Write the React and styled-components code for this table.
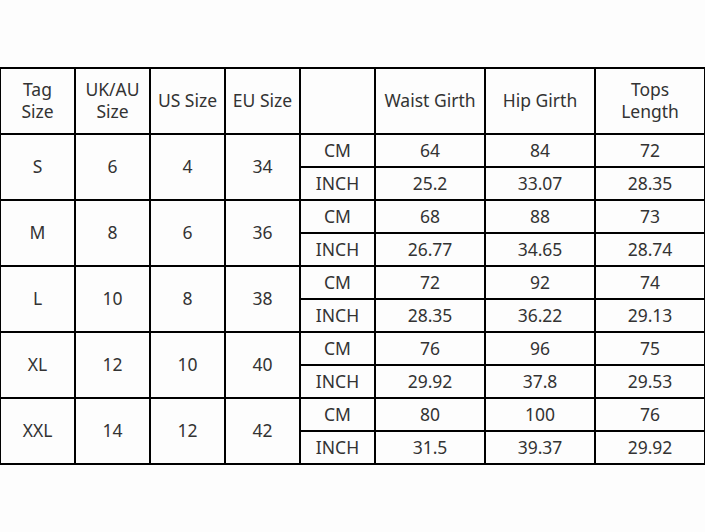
import React from 'react';
import styled, { createGlobalStyle } from 'styled-components';

const Global = createGlobalStyle`
  body {
    margin: 0;
    background: #fff;
    font-family: 'Noto Sans', 'Liberation Sans', sans-serif;
  }
`;

const Page = styled.div`
  width: 705px;
  height: 532px;
  padding-top: 67px;
  box-sizing: border-box;
  background: #fdfdfd;
  overflow: hidden;
`;

const Table = styled.table`
  border-collapse: collapse;
  table-layout: fixed;
  width: 705px;
  margin-left: -1px;
  color: #333;
  font-size: 17.5px;
`;

const Cell = styled.td`
  border: 2px solid #000;
  text-align: center;
  vertical-align: middle;
  padding: 0 0 2px;
  height: ${(p) => p.$h || 29}px;
  line-height: 22px;
`;

const Head = styled(Cell).attrs({ as: 'th' })`
  font-weight: normal;
`;

const cols = [75, 75, 75, 75, 75, 110, 110, 110];

const rows = [
  ['S', '6', '4', '34', ['64', '84', '72'], ['25.2', '33.07', '28.35']],
  ['M', '8', '6', '36', ['68', '88', '73'], ['26.77', '34.65', '28.74']],
  ['L', '10', '8', '38', ['72', '92', '74'], ['28.35', '36.22', '29.13']],
  ['XL', '12', '10', '40', ['76', '96', '75'], ['29.92', '37.8', '29.53']],
  ['XXL', '14', '12', '42', ['80', '100', '76'], ['31.5', '39.37', '29.92']],
];

export default function App() {
  return (
    <Page>
      <Global />
      <Table>
        <colgroup>
          {cols.map((w, i) => (
            <col key={i} style={{ width: w }} />
          ))}
        </colgroup>
        <thead>
          <tr>
            <Head $h={62}>Tag<br />Size</Head>
            <Head $h={62}>UK/AU<br />Size</Head>
            <Head $h={62}>US Size</Head>
            <Head $h={62}>EU Size</Head>
            <Head $h={62}></Head>
            <Head $h={62}>Waist Girth</Head>
            <Head $h={62}>Hip Girth</Head>
            <Head $h={62}>Tops<br />Length</Head>
          </tr>
        </thead>
        <tbody>
          {rows.map(([tag, uk, us, eu, cm, inch]) => (
            <React.Fragment key={tag}>
              <tr>
                <Cell rowSpan={2}>{tag}</Cell>
                <Cell rowSpan={2}>{uk}</Cell>
                <Cell rowSpan={2}>{us}</Cell>
                <Cell rowSpan={2}>{eu}</Cell>
                <Cell>CM</Cell>
                {cm.map((v, i) => (
                  <Cell key={i}>{v}</Cell>
                ))}
              </tr>
              <tr>
                <Cell>INCH</Cell>
                {inch.map((v, i) => (
                  <Cell key={i}>{v}</Cell>
                ))}
              </tr>
            </React.Fragment>
          ))}
        </tbody>
      </Table>
    </Page>
  );
}
